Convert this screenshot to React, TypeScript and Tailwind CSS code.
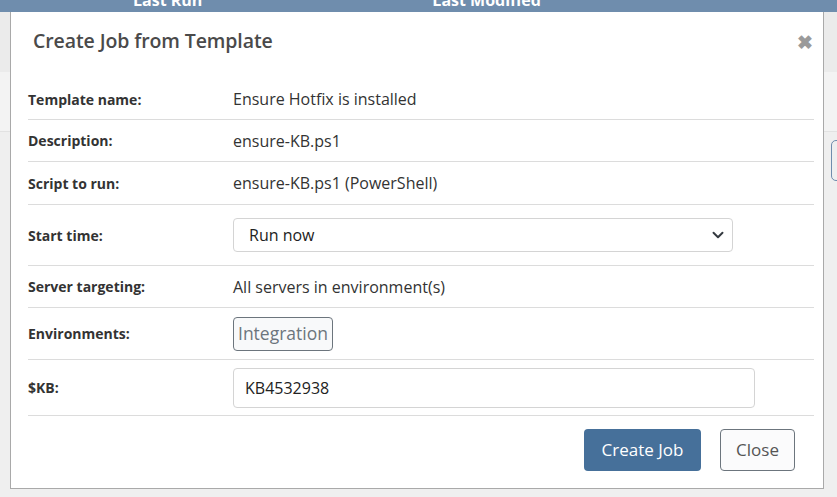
import React from "react";

function Chevron() {
  return (
    <svg width="12" height="12" viewBox="0 0 16 16" className="text-[#343a40]">
      <path d="M2 5l6 6 6-6" fill="none" stroke="currentColor" strokeWidth="2.6" strokeLinecap="round" strokeLinejoin="round" />
    </svg>
  );
}

export default function App() {
  const font = { fontFamily: '"Open Sans", "Noto Sans", sans-serif' };

  return (
    <div className="relative w-[837px] h-[497px] overflow-hidden bg-[#efefef]" style={font}>
      {/* page behind the dialog */}
      <div className="h-[12px] bg-[#6f8dad] flex text-white font-bold text-[16px] leading-none overflow-hidden">
        <span className="ml-[133px] -mt-[8px]">Last Run</span>
        <span className="ml-[230px] -mt-[8px]">Last Modified</span>
      </div>
      <div className="h-[60px] bg-[#ebebeb]" />
      <div className="h-[60px] bg-[#f3f3f3] border-b border-[#e2e2e2]" />
      <div className="absolute right-[-10px] top-[140px] w-[16px] h-[41px] border border-[#6f8dad] rounded-[5px]" />

      {/* dialog */}
      <div className="absolute left-[10px] top-[12px] w-[814px] h-[477px] bg-white border border-[#a9a9a9] border-t-0 flex flex-col">
        <div className="h-[67px] flex items-start justify-between pl-[22px] pr-[10px] pt-[14px]">
          <h2 className="text-[19.5px] font-semibold text-[#4a4a4a] tracking-[-0.1px]">Create Job from Template</h2>
          <span className="mt-[7px] text-[#9a9a9a] text-[19px] font-bold leading-none">&#x2716;</span>
        </div>

        <div className="pl-[17px] pr-[9px] text-[#333]">
          <Row h="h-[41px]" label="Template name:">
            <span className="text-[16px]">Ensure Hotfix is installed</span>
          </Row>
          <Row h="h-[42px]" label="Description:">
            <span className="text-[16px]">ensure-KB.ps1</span>
          </Row>
          <Row h="h-[43px]" label="Script to run:">
            <span className="text-[16px]">ensure-KB.ps1 (PowerShell)</span>
          </Row>
          <Row h="h-[61px]" label="Start time:">
            <div className="w-[500px] h-[34px] border border-[#d4d4d4] rounded-[4px] flex items-center justify-between pl-[15px] pr-[8px] text-[16px] text-[#222]">
              <span>Run now</span>
              <Chevron />
            </div>
          </Row>
          <Row h="h-[42px]" label="Server targeting:">
            <span className="text-[16px]">All servers in environment(s)</span>
          </Row>
          <Row h="h-[52px]" label="Environments:">
            <span className="h-[34px] px-[4px] flex items-center border border-[#6c757d] rounded-[4px] bg-[#f8f9fa] text-[#6c757d] text-[17.5px]">
              Integration
            </span>
          </Row>
          <Row h="h-[56px]" label="$KB:">
            <div className="w-[522px] h-[40px] border border-[#d4d4d4] rounded-[4px] flex items-center pl-[11px] text-[16px] text-[#222]">
              KB4532938
            </div>
          </Row>
        </div>

        <div className="flex justify-end gap-[19px] pr-[28px] pt-[13px]">
          <button className="w-[117px] h-[42px] rounded-[4px] bg-[#46709a] text-white text-[17px]">Create Job</button>
          <button className="w-[75px] h-[42px] rounded-[4px] border border-[#6c757d] bg-[#fbfbfc] text-[#555] text-[17px]">Close</button>
        </div>
      </div>
    </div>
  );
}

function Row({ label, h, children }: { label: string; h: string; children: React.ReactNode }) {
  return (
    <div className={`${h} flex items-center border-b border-[#dcdcdc]`}>
      <div className="w-[205px] shrink-0 text-[14px] font-bold">{label}</div>
      <div className="flex items-center">{children}</div>
    </div>
  );
}
